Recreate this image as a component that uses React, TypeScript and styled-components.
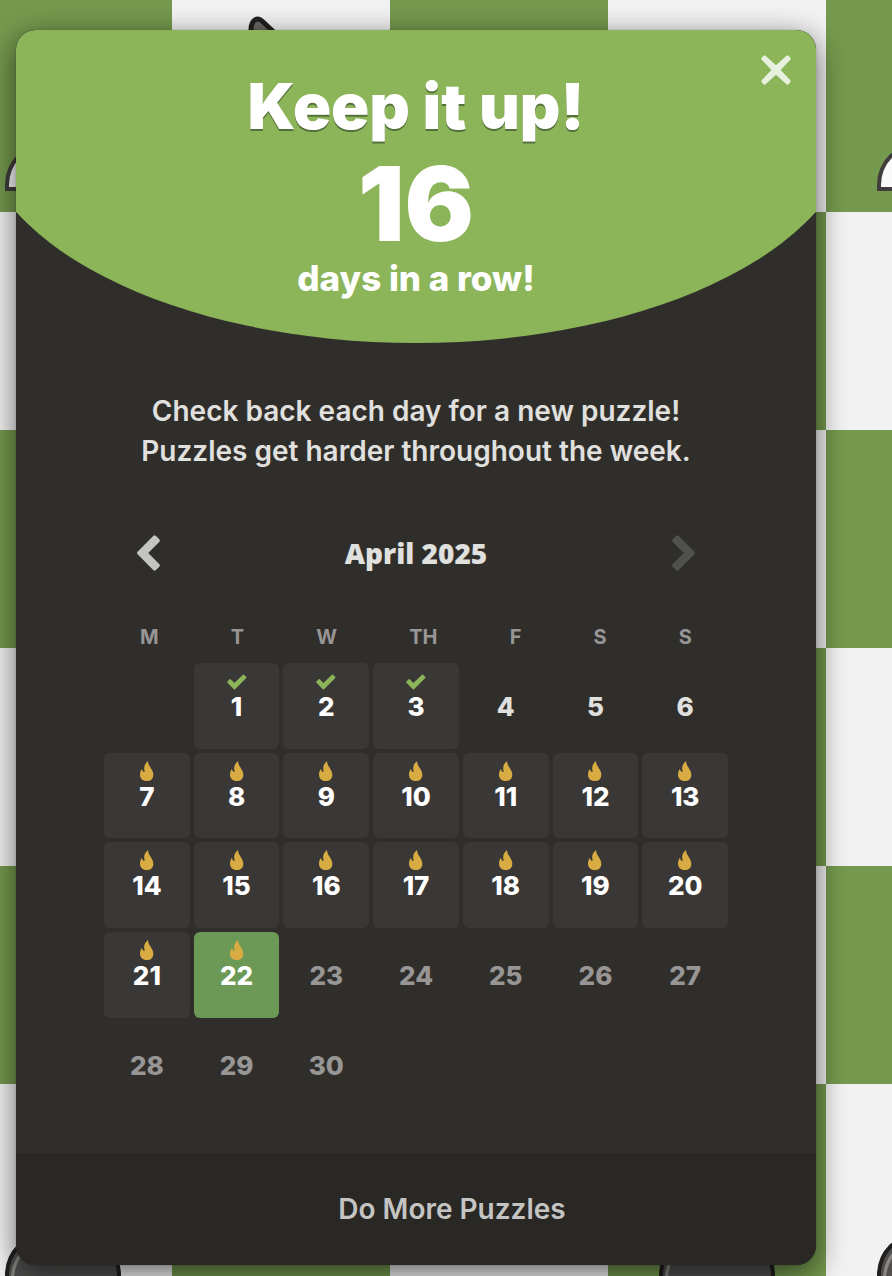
import React from "react";
import styled, { createGlobalStyle } from "styled-components";

const GlobalStyle = createGlobalStyle`
  *, *::before, *::after { box-sizing: border-box; }
  body { margin: 0; font-family: Inter, "Liberation Sans", sans-serif; }
  button { border: 0; padding: 0; background: none; font: inherit; color: inherit; cursor: pointer; }
  h1, h2, p { margin: 0; }
`;

const SQUARE = 218;

const Board = styled.div`
  position: relative;
  overflow: hidden;
  min-height: 100vh;
  padding: 30px 76px 11px 16px;
  background: conic-gradient(#f2f2f2 90deg, #75994e 0 180deg, #f2f2f2 0 270deg, #75994e 0)
    -46px -6px / 436px 436px;
`;

const PieceSvg = styled.svg<{ $file: number; $rank: number }>`
  position: absolute;
  left: ${(p) => p.$file * SQUARE - 46}px;
  top: ${(p) => p.$rank * SQUARE - 6}px;
  width: ${SQUARE}px;
  height: ${SQUARE}px;
`;

const Modal = styled.main`
  position: relative;
  overflow: hidden;
  border-radius: 20px;
  background: #302e2b;
  box-shadow: 0 0 1px rgba(0, 0, 0, 0.5), 0 8px 30px rgba(0, 0, 0, 0.6);
`;

const Hero = styled.header`
  display: flex;
  flex-direction: column;
  align-items: center;
  height: 313px;
  padding-top: 36px;
  background: #8cb55a;
  clip-path: ellipse(55% 225px at 50% 88px);
  color: #fff;
`;

const Title = styled.h1`
  font-size: 63px;
  line-height: 80px;
  font-weight: 900;
  text-shadow: 0 2px 0 #54703a;
`;

const Count = styled.strong`
  font-size: 103px;
  line-height: 116px;
  font-weight: 900;
`;

const Caption = styled.p`
  font-size: 35px;
  line-height: 32px;
  font-weight: 800;
`;

const CloseButton = styled.button`
  position: absolute;
  top: 24px;
  right: 24px;
  width: 32px;
  height: 32px;
  color: #e8f0de;
  svg { display: block; }
`;

const Content = styled.section`
  padding: 48px 88px 45px;
`;

const Message = styled.p`
  color: #e0e0df;
  font-size: 28px;
  line-height: 40px;
  font-weight: 600;
  text-align: center;
`;

const MonthBar = styled.nav`
  display: flex;
  align-items: center;
  justify-content: space-between;
  margin-top: 64px;
  padding: 0 32px;
`;

const Month = styled.h2`
  color: #e0e0df;
  font-family: "Noto Sans", "Open Sans", sans-serif;
  font-size: 28px;
  line-height: 36px;
  font-weight: 900;
`;

const Arrow = styled.button`
  width: 26px;
  height: 36px;
  color: #c4c4c3;
  &:disabled { color: #50504e; cursor: default; }
  svg { display: block; }
`;

const Weekdays = styled.div`
  display: flex;
  justify-content: space-around;
  margin-top: 54px;
  color: #979695;
  font-size: 20px;
  line-height: 24px;
  font-weight: 700;
`;

const Days = styled.div`
  display: grid;
  grid-template-columns: repeat(7, 1fr);
  gap: 4px;
  margin-top: 14px;
`;

type DayKind = "checked" | "streak" | "today" | "missed" | "future";

const dayBackground = { checked: "#3a3836", streak: "#3a3836", today: "#6c9955", missed: "transparent", future: "transparent" };
const dayColor = { checked: "#fff", streak: "#fff", today: "#fff", missed: "#e0e0df", future: "#979695" };

const Day = styled.button<{ $kind: DayKind }>`
  display: grid;
  grid-template-rows: 1fr 32px 1fr;
  justify-items: center;
  aspect-ratio: 1;
  padding-top: 2px;
  border-radius: 6px;
  background: ${(p) => dayBackground[p.$kind]};
  color: ${(p) => dayColor[p.$kind]};
  font-size: 26px;
  line-height: 32px;
  font-weight: 800;
  svg { grid-row: 1; align-self: end; }
  span { grid-row: 2; }
  &:first-child { grid-column-start: 2; }
`;

const Footer = styled.footer`
  display: flex;
  justify-content: center;
  padding: 36px 0 36px 72px;
  background: #292825;
`;

const MoreButton = styled.button`
  color: #c4c4c3;
  font-size: 28px;
  line-height: 40px;
  font-weight: 600;
`;

function Pawn({ file, rank, black }: { file: number; rank: number; black?: boolean }) {
  const fill = black ? "#51504f" : "#f9f9f9";
  const stroke = black ? "#21201f" : "#403d3c";
  return (
    <PieceSvg $file={file} $rank={rank} viewBox="0 0 218 218" aria-hidden="true">
      <g fill={fill} stroke={stroke} strokeWidth="4">
        <path d="M53 195V191C53 178 58 169 65 162C78 152 92 148 96 122H122C126 148 140 152 153 162C160 169 165 178 165 191V195Z" />
        <circle cx="109" cy="78" r="34" />
      </g>
      {black && <path d="M57 193C58 178 65 167 76 161C67 171 61 181 60 193Z" fill="#8a8886" />}
    </PieceSvg>
  );
}

function Knight({ file, rank }: { file: number; rank: number }) {
  return (
    <PieceSvg $file={file} $rank={rank} viewBox="0 0 218 218" aria-hidden="true">
      <path
        d="M58 195C58 160 92 150 90 118L58 122C44 110 60 92 74 66L79 36C79 25 86 23 90 27L106 42C150 54 164 110 160 195Z"
        fill="#6b6967"
        stroke="#21201f"
        strokeWidth="5"
        strokeLinejoin="round"
      />
    </PieceSvg>
  );
}

function FlameIcon() {
  return (
    <svg width="14" height="20" viewBox="0 0 42 60" fill="#d9ab43" aria-hidden="true">
      <path d="M24 0C25 9 27 13 31 19C36 27 40 33 40 41C40 53 32 60 20 60C8 60 0 52 0 41C0 34 2 28 6 24C7 29 9 33 13 33C14 33 14 31 13 26C11 14 17 6 24 0Z" />
    </svg>
  );
}

function CheckIcon() {
  return (
    <svg width="20" height="20" viewBox="0 -1 20 20" fill="#8cb55a" aria-hidden="true">
      <path d="M.4 9.6 2.7 7.3Q3.2 6.9 3.7 7.3L7.4 11 15.9 2.7Q16.4 2.2 16.9 2.7L19.4 5 19.5 5.8 8 17.2Q7.4 17.7 6.8 17.2L.5 10.8Q0 10.1.4 9.6Z" />
    </svg>
  );
}

function ChevronIcon({ flipped }: { flipped?: boolean }) {
  return (
    <svg width="26" height="36" viewBox="0 0 26 36" fill="currentColor" aria-hidden="true">
      <path
        transform={flipped ? "translate(26 0) scale(-1 1)" : undefined}
        d="M1.6 16.8 17.2.9Q18.6-.4 20 .9L23.3 4.2Q24.5 5.6 23.2 7L12.2 18 23.2 29Q24.5 30.4 23.3 31.8L20 35.1Q18.6 36.4 17.2 35.1L1.6 19.2Q.4 18 1.6 16.8Z"
      />
    </svg>
  );
}

function CloseIcon() {
  return (
    <svg width="32" height="32" viewBox="0 0 32 32" fill="currentColor" aria-hidden="true">
      <path d="M16 11.2 26.2 1.9Q27.5.8 28.7 2L30.2 3.5Q31.3 4.8 30.1 6L20.6 16 30.1 26Q31.3 27.2 30.2 28.5L28.7 30Q27.5 31.2 26.2 30.1L16 20.8 5.8 30.1Q4.5 31.2 3.3 30L1.8 28.5Q.7 27.2 1.9 26L11.4 16 1.9 6Q.7 4.8 1.8 3.5L3.3 2Q4.5.8 5.8 1.9Z" />
    </svg>
  );
}

const weekdays = ["M", "T", "W", "TH", "F", "S", "S"];

function kindOf(day: number): DayKind {
  if (day <= 3) return "checked";
  if (day <= 6) return "missed";
  if (day <= 21) return "streak";
  return day === 22 ? "today" : "future";
}

export default function App() {
  return (
    <>
      <GlobalStyle />
      <Board>
        <Pawn file={0} rank={0} />
        <Knight file={1} rank={0} />
        <Pawn file={4} rank={0} />
        <Pawn file={0} rank={5} black />
        <Pawn file={3} rank={5} black />
        <Pawn file={4} rank={5} black />
        <Modal>
          <Hero>
            <Title>Keep it up!</Title>
            <Count>16</Count>
            <Caption>days in a row!</Caption>
          </Hero>
          <CloseButton aria-label="Close">
            <CloseIcon />
          </CloseButton>
          <Content>
            <Message>
              Check back each day for a new puzzle!
              <br />
              Puzzles get harder throughout the week.
            </Message>
            <MonthBar>
              <Arrow aria-label="Previous month">
                <ChevronIcon />
              </Arrow>
              <Month>April 2025</Month>
              <Arrow aria-label="Next month" disabled>
                <ChevronIcon flipped />
              </Arrow>
            </MonthBar>
            <Weekdays>
              {weekdays.map((name, i) => (
                <span key={i}>{name}</span>
              ))}
            </Weekdays>
            <Days>
              {Array.from({ length: 30 }, (_, i) => i + 1).map((day) => {
                const kind = kindOf(day);
                return (
                  <Day key={day} $kind={kind}>
                    {kind === "checked" && <CheckIcon />}
                    {(kind === "streak" || kind === "today") && <FlameIcon />}
                    <span>{day}</span>
                  </Day>
                );
              })}
            </Days>
          </Content>
          <Footer>
            <MoreButton>Do More Puzzles</MoreButton>
          </Footer>
        </Modal>
      </Board>
    </>
  );
}
